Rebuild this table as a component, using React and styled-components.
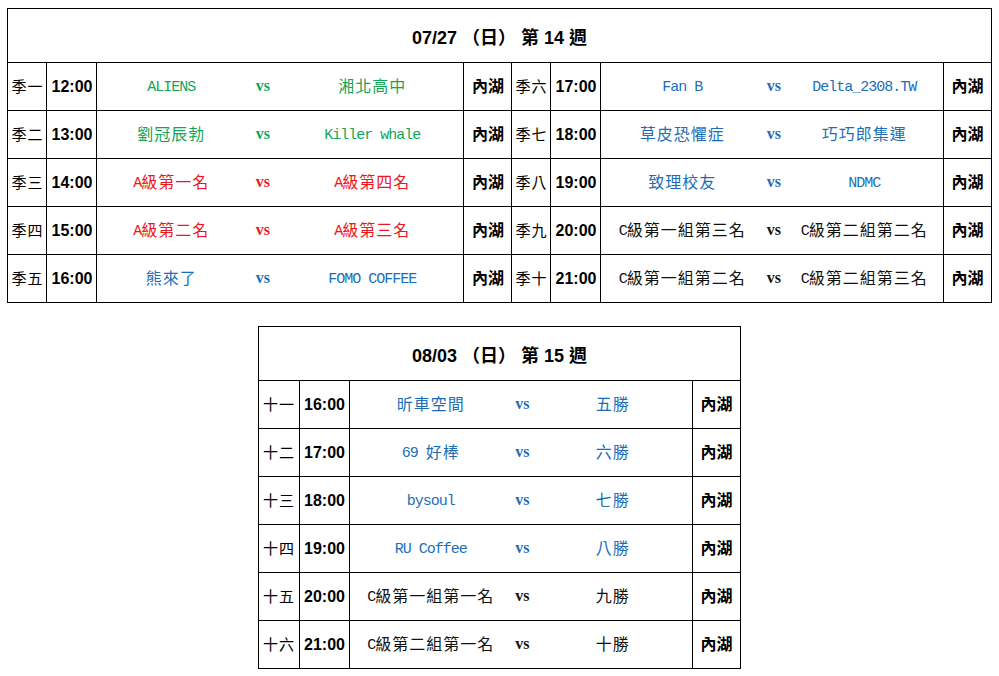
import React from "react";
import styled, { createGlobalStyle } from "styled-components";

const GlobalStyle = createGlobalStyle`
  body {
    margin: 0;
    background: #fff;
    font-family: "Liberation Sans", "Noto Sans CJK TC", sans-serif;
  }
`;

const COLORS = {
  green: "#14a556",
  red: "#ee1620",
  blue: "#1b6fb7",
  black: "#111",
};

const Page = styled.div`
  display: flex;
  flex-direction: column;
  align-items: center;
  gap: 23px;
  padding: 8px 0;
`;

const Schedule = styled.table`
  border-collapse: collapse;
  table-layout: fixed;
  width: ${(p) => p.$width}px;
  color: #000;

  td,
  th {
    border: 1px solid #000;
    padding: 0;
    text-align: center;
    vertical-align: middle;
    white-space: nowrap;
    overflow: hidden;
  }

  tr {
    height: 48px;
  }
`;

const TitleRow = styled.tr`
  && {
    height: ${(p) => p.$height}px;
  }
`;

const Title = styled.th`
  font-family: "Liberation Sans", "Noto Sans CJK TC", sans-serif;
  font-size: 18px;
  font-weight: bold;
`;

const RoundCell = styled.td`
  && {
    padding-bottom: 3px;
  }
  font-family: "Noto Sans CJK TC", sans-serif;
  font-size: 15px;
  letter-spacing: 1px;
`;

const TimeCell = styled.td`
  font-family: "Liberation Sans", sans-serif;
  font-size: 16px;
  font-weight: bold;
`;

const TeamCell = styled.td`
  && {
    border-left: none;
    border-right: none;
    padding-bottom: 3px;
  }
  color: ${(p) => COLORS[p.$tone]};
  font-family: "Noto Sans CJK TC", sans-serif;
  font-size: 16px;
  letter-spacing: 1px;
`;

const Latin = styled.span`
  font-family: "Liberation Mono", monospace;
  font-size: 15px;
  letter-spacing: -1px;
  vertical-align: 1px;
`;

const VsCell = styled(TeamCell)`
  font-family: "Liberation Serif", serif;
  font-weight: bold;
  font-size: 16px;
  letter-spacing: 0;
  && {
    padding-bottom: 1px;
  }
`;

const VenueCell = styled.td`
  && {
    padding-bottom: 3px;
  }
  font-family: "Noto Sans CJK TC", sans-serif;
  font-size: 16px;
  font-weight: bold;
`;

function Name({ text }) {
  const parts = text.split(/([\x20-\x7E]+)/).filter(Boolean);
  return parts.map((part, i) =>
    /^[\x20-\x7E]+$/.test(part) ? <Latin key={i}>{part}</Latin> : <span key={i}>{part}</span>
  );
}

function MatchCells({ game }) {
  return (
    <>
      <RoundCell>{game.round}</RoundCell>
      <TimeCell>{game.time}</TimeCell>
      <TeamCell $tone={game.tone}>
        <Name text={game.home} />
      </TeamCell>
      <VsCell $tone={game.tone}>vs</VsCell>
      <TeamCell $tone={game.tone}>
        <Name text={game.away} />
      </TeamCell>
      <VenueCell>內湖</VenueCell>
    </>
  );
}

const week14Left = [
  { round: "季一", time: "12:00", home: "ALIENS", away: "湘北高中", tone: "green" },
  { round: "季二", time: "13:00", home: "劉冠辰勃", away: "Killer whale", tone: "green" },
  { round: "季三", time: "14:00", home: "A級第一名", away: "A級第四名", tone: "red" },
  { round: "季四", time: "15:00", home: "A級第二名", away: "A級第三名", tone: "red" },
  { round: "季五", time: "16:00", home: "熊來了", away: "FOMO COFFEE", tone: "blue" },
];

const week14Right = [
  { round: "季六", time: "17:00", home: "Fan B", away: "Delta_2308.TW", tone: "blue" },
  { round: "季七", time: "18:00", home: "草皮恐懼症", away: "巧巧郎集運", tone: "blue" },
  { round: "季八", time: "19:00", home: "致理校友", away: "NDMC", tone: "blue" },
  { round: "季九", time: "20:00", home: "C級第一組第三名", away: "C級第二組第二名", tone: "black" },
  { round: "季十", time: "21:00", home: "C級第一組第二名", away: "C級第二組第三名", tone: "black" },
];

const week15 = [
  { round: "十一", time: "16:00", home: "昕車空間", away: "五勝", tone: "blue" },
  { round: "十二", time: "17:00", home: "69 好棒", away: "六勝", tone: "blue" },
  { round: "十三", time: "18:00", home: "bysoul", away: "七勝", tone: "blue" },
  { round: "十四", time: "19:00", home: "RU Coffee", away: "八勝", tone: "blue" },
  { round: "十五", time: "20:00", home: "C級第一組第一名", away: "九勝", tone: "black" },
  { round: "十六", time: "21:00", home: "C級第二組第一名", away: "十勝", tone: "black" },
];

const cols14 = [39, 50, 148, 36, 183, 48, 39, 50, 162, 22, 159, 47];
const cols15 = [41, 50, 162, 22, 159, 48];

function Cols({ widths }) {
  return (
    <colgroup>
      {widths.map((w, i) => (
        <col key={i} style={{ width: w }} />
      ))}
    </colgroup>
  );
}

export default function App() {
  return (
    <>
      <GlobalStyle />
      <Page>
        <Schedule $width={984}>
          <Cols widths={cols14} />
          <tbody>
            <TitleRow $height={54}>
              <Title colSpan={12}>07/27 （日） 第 14 週</Title>
            </TitleRow>
            {week14Left.map((game, i) => (
              <tr key={game.round}>
                <MatchCells game={game} />
                <MatchCells game={week14Right[i]} />
              </tr>
            ))}
          </tbody>
        </Schedule>

        <Schedule $width={483}>
          <Cols widths={cols15} />
          <tbody>
            <TitleRow $height={54}>
              <Title colSpan={6}>08/03 （日） 第 15 週</Title>
            </TitleRow>
            {week15.map((game) => (
              <tr key={game.round}>
                <MatchCells game={game} />
              </tr>
            ))}
          </tbody>
        </Schedule>
      </Page>
    </>
  );
}
